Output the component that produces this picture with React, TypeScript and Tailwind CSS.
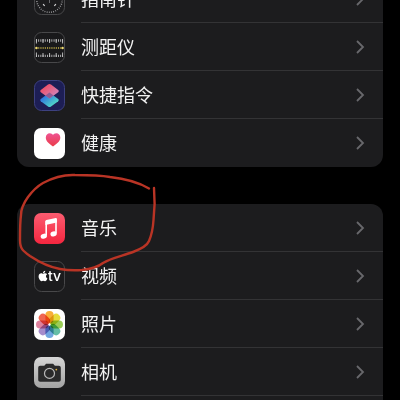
import type { JSX } from "react";
import { FaApple } from "react-icons/fa";

const petals = [
  "#f7a31c",
  "#e3d61f",
  "#8cc63f",
  "#4fb59a",
  "#5d9bdc",
  "#9a7cc4",
  "#d9708f",
  "#ee5138",
];

const CompassIcon = (): JSX.Element => (
  <svg className="size-[31px]" viewBox="0 0 31 31" aria-hidden="true">
    <rect x="0.5" y="0.5" width="30" height="30" rx="7" fill="#1b1b1d" stroke="#48484a" />
    <circle cx="15.5" cy="15.5" r="12.8" fill="none" stroke="#a5a5a8" strokeWidth="1.5" strokeDasharray="0.8 1.4" />
    <path d="M15.5 5v14M5 15.5h21" stroke="#8a8a8e" strokeWidth="0.7" />
    <path d="M9.2 20l1.4 2M21.8 20l-1.4 2M9.2 10.800l1.400-2M21.800 10.800l-1.400-2" stroke="#d0d0d2" strokeWidth="1.3" />
    <path d="M15.5 1.5l1.3 2.5h-2.6z" fill="#e5372c" />
  </svg>
);

const MeasureIcon = (): JSX.Element => (
  <svg className="size-[31px]" viewBox="0 0 31 31" aria-hidden="true">
    <rect x="0.5" y="0.5" width="30" height="30" rx="7" fill="#19191b" stroke="#48484a" />
    <path d="M2 8.5h27" stroke="#b9b9bb" strokeWidth="2.6" strokeDasharray="0.9 1.3" />
    <path d="M2.4 7v4.500M9 7v4M15.6 7v4M22.2 7v4M28.6 7v4.500" stroke="#c9c9cb" strokeWidth="0.9" />
    <path d="M2 16h27" stroke="#c9b54a" strokeWidth="1.5" strokeDasharray="1.1 1.1" />
    <circle cx="2.4" cy="16" r="1.2" fill="#f0dc72" />
    <circle cx="28.6" cy="16" r="1.2" fill="#f0dc72" />
    <path d="M2 23.8h27" stroke="#b9b9bb" strokeWidth="2.2" strokeDasharray="0.9 1.3" />
    <path d="M2.4 20.500v4.500M9 21v4M15.6 21v4M22.2 21v4M28.6 20.500v4.500" stroke="#c9c9cb" strokeWidth="0.9" />
  </svg>
);

const ShortcutsIcon = (): JSX.Element => (
  <svg className="size-[31px]" viewBox="0 0 31 31" aria-hidden="true">
    <defs>
      <linearGradient id="shortcuts-top" x1="0" y1="0" x2="1" y2="1">
        <stop offset="0.2" stopColor="#ee5068" />
        <stop offset="0.8" stopColor="#d283b8" />
      </linearGradient>
      <linearGradient id="shortcuts-bottom" x1="0" y1="0" x2="1" y2="1">
        <stop offset="0.2" stopColor="#2d6fe0" />
        <stop offset="0.8" stopColor="#4fd6c8" />
      </linearGradient>
    </defs>
    <rect x="0.5" y="0.5" width="30" height="30" rx="7" fill="#1d1e55" stroke="#3d4180" />
    <path
      d="M6.8 19 15.5 12.5 24.2 19a1.4 1.4 0 0 1 0 2.200L17 26.4a2.6 2.6 0 0 1-3 0l-7.200-5.200a1.4 1.4 0 0 1 0-2.200z"
      fill="url(#shortcuts-bottom)"
    />
    <path
      d="M6.8 10 14 4.600a2.6 2.6 0 0 1 3 0l7.200 5.400a1.4 1.4 0 0 1 0 2.200l-8.700 6.300-8.700-6.300a1.4 1.4 0 0 1 0-2.200z"
      fill="url(#shortcuts-top)"
    />
    <path d="M15.5 12.500 19.600 15.500 15.5 18.500 11.400 15.500z" fill="#7d5590" opacity="0.8" />
  </svg>
);

const HealthIcon = (): JSX.Element => (
  <svg className="size-[31px]" viewBox="0 0 31 31" aria-hidden="true">
    <defs>
      <linearGradient id="health" x1="0" y1="0" x2="0" y2="1">
        <stop offset="0" stopColor="#ef5392" />
        <stop offset="1" stopColor="#ea3b48" />
      </linearGradient>
    </defs>
    <rect width="31" height="31" rx="7" fill="#fff" />
    <path
      d="M19 18.500c-3.500-2.300-7.200-5-7.200-8.900 0-2.500 1.800-4.300 4-4.300 1.400 0 2.600.7 3.200 1.800.6-1.100 1.800-1.800 3.300-1.800 2.200 0 4 1.800 4 4.300 0 3.900-3.800 6.600-7.300 8.900z"
      fill="url(#health)"
    />
  </svg>
);

const MusicIcon = (): JSX.Element => (
  <svg className="size-[31px]" viewBox="0 0 31 31" aria-hidden="true">
    <defs>
      <linearGradient id="music" x1="0" y1="0" x2="0" y2="1">
        <stop offset="0" stopColor="#fb5c70" />
        <stop offset="1" stopColor="#f5263f" />
      </linearGradient>
    </defs>
    <rect width="31" height="31" rx="7" fill="url(#music)" />
    <path d="M12.2 22.500V9.200L22 7v13.200" fill="none" stroke="#fff" strokeWidth="1.6" />
    <path d="M11.4 8.300c0-.7.3-1 .9-1.200l9.500-2.100c.7-.1 1 .2 1 .8v3.800L11.4 12z" fill="#fff" />
    <ellipse cx="9.8" cy="23.2" rx="3.2" ry="2.4" transform="rotate(-18 9.8 23.2)" fill="#fff" />
    <ellipse cx="19.6" cy="20.9" rx="3.2" ry="2.4" transform="rotate(-18 19.6 20.9)" fill="#fff" />
  </svg>
);

const TvIcon = (): JSX.Element => (
  <svg className="size-[31px]" viewBox="0 0 31 31" aria-hidden="true">
    <rect x="0.5" y="0.5" width="30" height="30" rx="7" fill="#1b1b1d" stroke="#48484a" />
    <FaApple x="3" y="9" size={12} color="#fff" />
    <text x="14" y="20" fill="#fff" className="font-['Inter','Liberation_Sans',sans-serif] text-[14px] font-medium">
      tv
    </text>
  </svg>
);

const PhotosIcon = (): JSX.Element => (
  <svg className="size-[31px]" viewBox="0 0 31 31" aria-hidden="true">
    <rect width="31" height="31" rx="7" fill="#fff" />
    {petals.map((color, index) => (
      <rect
        key={color}
        x="11.4"
        y="2"
        width="8.2"
        height="12.6"
        rx="4.1"
        fill={color}
        className="mix-blend-multiply"
        opacity="0.88"
        transform={`rotate(${index * 45} 15.5 15.5)`}
      />
    ))}
    <circle cx="15.5" cy="15.5" r="1" fill="#fff" />
  </svg>
);

const CameraIcon = (): JSX.Element => (
  <svg className="size-[31px]" viewBox="0 0 31 31" aria-hidden="true">
    <defs>
      <linearGradient id="camera" x1="0" y1="0" x2="0" y2="1">
        <stop offset="0" stopColor="#d6d6d6" />
        <stop offset="1" stopColor="#a3a3a3" />
      </linearGradient>
    </defs>
    <rect width="31" height="31" rx="7" fill="url(#camera)" />
    <path
      d="M6.2 8.700h3.600c.7 0 1-.3 1.300-.8.4-.8.8-1.200 1.700-1.200h5.600c.9 0 1.300.4 1.700 1.200.3.5.6.8 1.300.8h3.400c1.200 0 2 .8 2 2v12c0 1.200-.8 2-2 2H6.200c-1.200 0-2-.8-2-2v-12c0-1.200.8-2 2-2z"
      fill="#2a2a2b"
    />
    <circle cx="15.5" cy="16.4" r="5" fill="none" stroke="#b9b9b9" strokeWidth="1.2" />
    <circle cx="22.3" cy="12.6" r="0.9" fill="#e3b341" />
  </svg>
);

const systemApps = [
  { uid: "compass", title: "指南针", Icon: CompassIcon },
  { uid: "measure", title: "测距仪", Icon: MeasureIcon },
  { uid: "shortcuts", title: "快捷指令", Icon: ShortcutsIcon },
  { uid: "health", title: "健康", Icon: HealthIcon },
];

const mediaApps = [
  { uid: "music", title: "音乐", Icon: MusicIcon },
  { uid: "tv", title: "视频", Icon: TvIcon },
  { uid: "photos", title: "照片", Icon: PhotosIcon },
  { uid: "camera", title: "相机", Icon: CameraIcon },
];

type RowProps = {
  uid: string;
  title: string;
  Icon: () => JSX.Element;
};

const SettingsRow = ({ uid, title, Icon }: RowProps): JSX.Element => (
  <li className="group">
    <a href={`#${uid}`} className="flex items-stretch gap-4 pl-[17px]">
      <span className="flex items-center">
        <Icon />
      </span>
      <span className="flex h-12 flex-1 items-center justify-between border-b border-[#333335] pr-[17px] group-last:border-transparent">
        <span className="pt-0.5 text-lg text-[#f2f2f2]">{title}</span>
        <svg className="h-4 w-3" viewBox="0 0 12 16" aria-hidden="true">
          <path d="M3 2 9 8 3 14" fill="none" stroke="#68686c" strokeWidth="1.8" />
        </svg>
      </span>
    </a>
  </li>
);

// red pen stroke around the music row
const PenCircle = (): JSX.Element => (
  <svg
    className="pointer-events-none absolute -left-1 -top-8 h-[104px] w-[148px]"
    viewBox="13 172 148 104"
    aria-hidden="true"
  >
    <path
      d="M149 188.5C138 182 124 178.5 110 177C99 175 87 175 75 175C63 174.5 54 177 43 183C36 187 31 193 28 197C23 204 21 210 21 215C20 222 20 233 20 240C20 249 23 251 30 256C39 262 49 267 60 269C68 270.5 76 270.5 82 270C91 269 98 267 103 263C111 258 122 256 133 252C141 249 147 246 149 241C152 234 153 228 153.5 220C155 208 155 199 154 188"
      fill="none"
      stroke="#b93425"
      strokeWidth="2.4"
      strokeLinecap="round"
      strokeLinejoin="round"
    />
  </svg>
);

export default function App(): JSX.Element {
  return (
    <main
      lang="zh-CN"
      className="flex h-screen flex-col gap-[37px] overflow-hidden bg-black px-[17px] font-['Liberation_Sans','Noto_Sans_CJK_SC',sans-serif]"
    >
      {/* the list is scrolled, so its first row starts above the window */}
      <ul className="-mt-[25px] shrink-0 rounded-xl bg-[#1c1c1e]">
        {systemApps.map((app) => (
          <SettingsRow key={app.uid} {...app} />
        ))}
      </ul>
      <div className="relative flex-1">
        <ul className="h-full rounded-t-xl bg-[#1c1c1e]">
          {mediaApps.map((app) => (
            <SettingsRow key={app.uid} {...app} />
          ))}
          <li className="h-12" />
        </ul>
        <PenCircle />
      </div>
    </main>
  );
}
